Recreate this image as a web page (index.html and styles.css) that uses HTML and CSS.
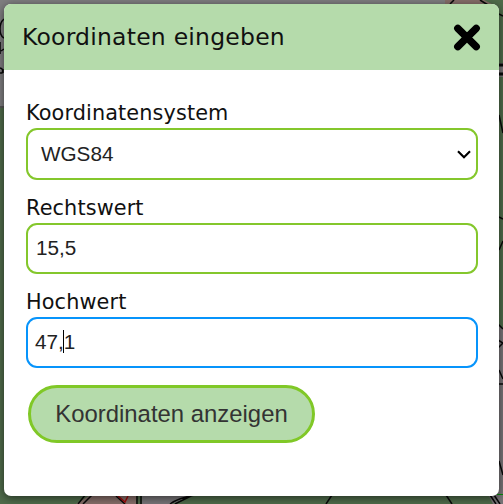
FILE: index.html
```html
<!DOCTYPE html>
<html lang="de">
<head>
<meta charset="utf-8">
<title>Koordinaten eingeben</title>
<link rel="stylesheet" href="styles.css">
</head>
<body>
<svg class="map" viewBox="0 0 503 504" aria-hidden="true">
  <rect width="503" height="504" fill="#4f6b4a"/>
  <rect width="445" height="107" fill="#7e7d7f"/>
  <path d="M0 107H8" stroke="#555" stroke-width="2"/>
  <path d="M445 0H484L496 6H445Z" fill="#866e69"/>
  <path d="M497 63h6v14h-6zM496 322l7 7v168h-7z" fill="#777477"/>
  <path d="M76 504L92 494H136V504Z" fill="#866e69"/>
  <path d="M142 494H196L172 504H142Z" fill="#777477"/>
  <path d="M488 494h15v10h-10z" fill="#777477"/>
  <g fill="none" stroke="#080808" stroke-width="1.5">
    <path d="M4 19Q0 22 0 29T4 38M0 42v12M1 51l3-2M0 68q4 1 2 5H0M3 73v-4"/>
    <path d="M450 4l4-4M480 0l8 5M499 14l4 2M499 115l4 18M499 217l4 2M499 250l4-9M498 324l5 5M498 340l5 3-5 5M499 370l4 9M498 384h5M499 461l4 14"/>
    <path d="M78 504l8-10M83 504l10-10M116 496l9 8M137 494v10M141 494v10M170 504q8-6 25-9M175 504l18-9M326 504l6-9M446 495l6 9M490 495l6 9M494 495l6 9"/>
    <path d="M499 65h4M499 74h4" stroke-width="3"/>
  </g>
  <path d="M118 496l7 6 3-6" fill="none" stroke="#a00b0b" stroke-width="1.5"/>
  <path d="M497 494.500h6" stroke="#078b07"/>
</svg>
<main class="dialog">
  <header class="dialog-header">
    <h1 class="title">Koordinaten eingeben</h1>
    <svg class="close" viewBox="0 0 28 28" role="img" aria-label="Schließen"><path d="M4.800 5.300L23.200 23.700M23.200 5.300L4.800 23.700"/></svg>
  </header>
  <form class="form">
    <label class="label">Koordinatensystem</label>
    <div class="field select"><span>WGS84</span><svg class="chevron" viewBox="0 0 14 9"><path d="M1 1.300L7 7.200L13 1.300"/></svg></div>
    <label class="label">Rechtswert</label>
    <div class="field"><span>15,5</span></div>
    <label class="label">Hochwert</label>
    <div class="field focused"><span>47,<i class="caret"></i>1</span></div>
    <button class="submit" type="button">Koordinaten anzeigen</button>
  </form>
</main>
</body>
</html>
```
FILE: styles.css
```css
* { box-sizing: border-box; }
body { margin: 0; width: 503px; height: 504px; padding: 4px; overflow: hidden; background: #4a6546; }
.map { position: absolute; inset: 0; width: 503px; height: 504px; }
.dialog { position: relative; width: 495px; height: 492px; border-radius: 7px; overflow: hidden; background: #fff; box-shadow: 0 2px 8px rgba(0, 0, 0, .55); }
.dialog-header { display: flex; align-items: center; justify-content: space-between; height: 66px; padding: 0 18px; background: #b5dbab; }
.title { margin: 0; font: 400 23.500px/30px "DejaVu Sans", sans-serif; letter-spacing: .22px; color: #111; white-space: nowrap; }
.close { width: 28px; height: 28px; fill: none; stroke: #000; stroke-width: 7.400; stroke-linecap: round; }
.form { display: flex; flex-direction: column; padding: 30px 21px 0 22px; }
.label { height: 28px; font: 20.800px/26px "DejaVu Sans", sans-serif; letter-spacing: .12px; color: #111; }
.field { display: flex; align-items: center; height: 51px; margin-bottom: 15px; padding: 0 7px 1px 8px; border: 2px solid #84c72c; border-radius: 11px; font: 20.700px/24px "Liberation Sans", sans-serif; color: #222; }
.select { height: 52px; justify-content: space-between; padding: 0 5px 0 13px; }
.chevron { width: 14px; height: 9px; margin-top: 1px; fill: none; stroke: #000; stroke-width: 2.200; }
.focused { border-color: #0794fb; padding-left: 7px; margin-bottom: 17px; }
.caret { display: inline-block; width: 1px; height: 23px; margin: 0 0 0 -1px; vertical-align: -4px; background: #000; }
.submit { width: 287px; height: 58px; margin-left: 2px; padding: 0; border: 3px solid #80c827; border-radius: 29px; background: #b5dbab; font: 23.900px/28px "Liberation Sans", sans-serif; color: #333; white-space: nowrap; }
```
